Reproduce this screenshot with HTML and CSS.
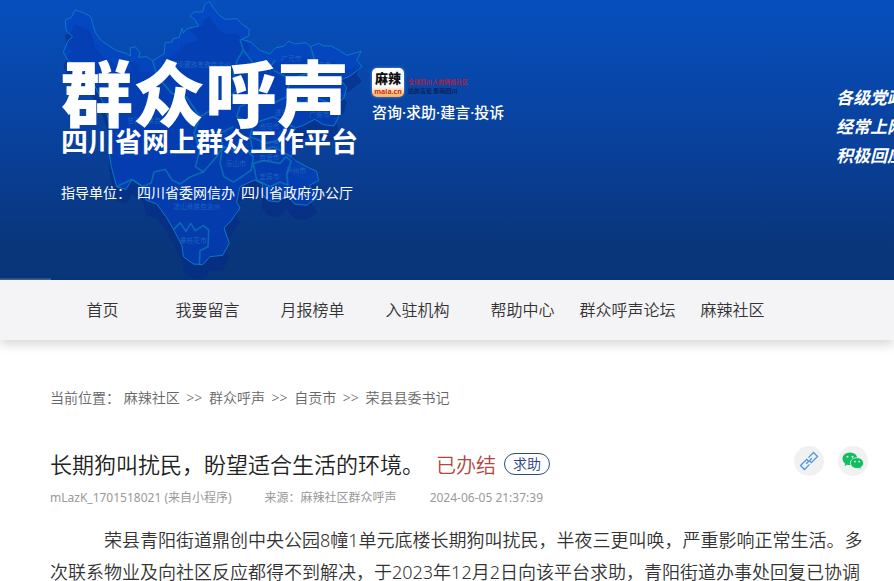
FILE: index.html
```html
<!DOCTYPE html>
<html lang="zh-CN">
  <head>
    <meta charset="UTF-8" />
    <meta name="viewport" content="width=device-width, initial-scale=1" />
    <title>群众呼声</title>
    <link rel="stylesheet" href="styles.css">
  </head>
  <body>
    <header class="banner">
      <svg class="map" viewBox="0 0 1020 840" aria-hidden="true">
        <defs>
          <path id="province" d="M105 30L130 38 152 50 158 70 166 98 184 122 208 138 230 152 258 160 272 168 270 144 286 140 300 158 296 172 320 170 338 182 372 162 376 128 396 126 400 116 418 112 426 84 430 100 440 86 476 78 464 58 450 48 462 36 488 36 494 14 508 4 522 26 536 44 556 58 590 56 606 72 628 88 626 108 604 118 632 126 658 150 690 162 706 144 732 138 746 124 766 132 796 128 812 140 836 130 852 138 874 138 896 150 920 166 964 154 950 180 966 200 930 228 902 240 920 262 912 294 886 316 896 350 882 378 850 374 824 358 790 376 766 384 754 410 766 436 754 470 766 482 800 500 830 514 836 542 808 556 832 592 800 616 764 612 740 586 714 606 684 602 664 578 668 552 644 540 600 560 590 606 600 624 572 664 552 684 568 730 548 766 510 770 488 794 460 792 430 770 426 738 402 690 378 650 350 612 318 600 308 560 276 538 258 568 230 560 214 500 206 450 216 400 200 340 186 300 160 250 124 206 84 182 70 156 84 122 98 110 78 92 76 60 94 52Z"/>
        </defs>
        <use href="#province" class="map-shadow" y="44"/>
        <use href="#province" class="map-land"/>
        <g class="map-borders">
          <path d="M338 182L352 230 396 280 440 292 480 350 520 326 560 300 600 260 580 220 592 180 610 150 600 118"/>
          <path d="M480 350L462 400 480 450 466 500 490 516 530 470 548 440 540 400 580 380"/>
          <path d="M230 560L276 538 308 560 334 548 342 516 376 508 396 540 420 552 452 530 490 516"/>
          <path d="M548 440L540 490 552 530 580 546 606 530 634 510 640 470 610 440 580 450Z"/>
          <path d="M640 490L672 482 720 490 738 470 754 484 740 520 744 556 720 546 690 560 650 540Z"/>
          <path d="M610 150L640 190 690 200 706 180M812 140L824 180 806 220 750 236 700 210M806 220L850 250 902 240M750 236L740 290 790 310 820 290 886 316"/>
          <path d="M740 290L700 310 640 300 600 320 590 350 640 370 700 350 740 370 766 384M640 370L630 410 680 430 754 410M630 410L640 460 700 440 754 470"/>
          <path d="M400 690L420 668 438 694 452 670 466 692 490 676 506 690 504 740 480 752 478 794"/>
        </g>
        <g class="map-names">
          <text x="392" y="200">阿坝藏族羌族自治州</text>
          <text x="262" y="370">甘孜藏族自治州</text>
          <text x="724" y="184">广元市</text>
          <text x="814" y="202">巴中市</text>
          <text x="808" y="352">广安市</text>
          <text x="704" y="346">遂宁市</text>
          <text x="658" y="388">资阳市</text>
          <text x="658" y="442">内江市</text>
          <text x="658" y="480">自贡市</text>
          <text x="558" y="498">乐山市</text>
          <text x="658" y="536">宜宾市</text>
          <text x="738" y="518">泸州市</text>
          <text x="400" y="628">凉山彝族自治州</text>
          <text x="420" y="728">攀枝花市</text>
        </g>
      </svg>

      <div class="brand">
        <h1 class="brand-name">群众呼声</h1>
        <p class="brand-sub">四川省网上群众工作平台</p>
        <p class="brand-units"><span>指导单位：</span><span>四川省委网信办</span><span>四川省政府办公厅</span></p>
      </div>

      <div class="partner">
        <div class="partner-row">
          <div class="mala"><b>麻辣</b><small>mala.cn</small></div>
          <div class="partner-text">
            <span class="partner-red">全球四川人的网络社区</span>
            <span class="partner-dark">达的言论 影响四川</span>
          </div>
        </div>
        <p class="slogan">咨询·求助·建言·投诉</p>
      </div>

      <div class="motto">
        <p>各级党政</p>
        <p>经常上网</p>
        <p>积极回应</p>
      </div>
    </header>

    <nav class="nav">
      <a href="#">首页</a>
      <a href="#">我要留言</a>
      <a href="#">月报榜单</a>
      <a href="#">入驻机构</a>
      <a href="#">帮助中心</a>
      <a href="#">群众呼声论坛</a>
      <a href="#">麻辣社区</a>
    </nav>

    <main class="content">
      <div class="crumbs">
        当前位置：
        <a href="#">麻辣社区</a> <span>&gt;&gt;</span>
        <a href="#">群众呼声</a> <span>&gt;&gt;</span>
        <a href="#">自贡市</a> <span>&gt;&gt;</span>
        <a href="#">荣县县委书记</a>
      </div>

      <div class="title-row">
        <h2 class="title">长期狗叫扰民，盼望适合生活的环境。</h2>
        <span class="status">已办结</span>
        <span class="tag">求助</span>
        <div class="share">
          <button type="button" aria-label="复制链接">
            <svg width="20" height="20" viewBox="0 0 20 20" fill="none" stroke="#4a97e0" stroke-width="1.3">
              <g transform="rotate(-45 10 10)">
                <path d="M8 12.800H.8V7.200h8.700v2.300M12 7.200h7.200v5.600h-8.700v-2.300"/>
                <path d="M6 10h8"/>
              </g>
            </svg>
          </button>
          <button type="button" aria-label="分享到微信">
            <svg width="22" height="18" viewBox="0 0 22 18">
              <path fill="#0fbf5f" d="M8 .5C3.800.5.5 3.300.5 6.800c0 2 1.100 3.700 2.800 4.900l-.7 2.300 2.600-1.300c.9.2 1.800.4 2.900.4C12.200 13 15.500 10.200 15.500 6.800S12.200.5 8 .5z"/>
              <path fill="#0fbf5f" stroke="#f1f1f1" stroke-width=".8" d="M15 5.700c-3.700 0-6.600 2.400-6.600 5.400s2.900 5.400 6.600 5.400c.8 0 1.600-.1 2.300-.3l2.200 1.200-.6-2c1.600-1 2.600-2.500 2.600-4.300 0-3-2.900-5.400-6.500-5.400z"/>
              <g fill="#f1f1f1">
                <circle cx="5.500" cy="4.800" r="1"/>
                <circle cx="10.500" cy="4.800" r="1"/>
                <circle cx="13" cy="9.600" r=".9"/>
                <circle cx="17.200" cy="9.600" r=".9"/>
              </g>
            </svg>
          </button>
        </div>
      </div>

      <div class="meta">
        <span>mLazK_1701518021 (来自小程序)</span>
        <span>来源：麻辣社区群众呼声</span>
        <span>2024-06-05 21:37:39</span>
      </div>

      <p class="text">荣县青阳街道鼎创中央公园8幢1单元底楼长期狗叫扰民，半夜三更叫唤，严重影响正常生活。多次联系物业及向社区反应都得不到解决，于2023年12月2日向该平台求助，青阳街道办事处回复已协调</p>
    </main>
  </body>
</html>
```

FILE: styles.css
```css
* {
  box-sizing: border-box;
}
body {
  margin: 0;
  font-family: "Noto Sans", "Noto Sans CJK SC", sans-serif;
  font-weight: 350;
  color: #333;
  background-color: #fff;
}
h1,
h2,
p {
  margin: 0;
}
a {
  color: inherit;
  text-decoration: none;
}

/* banner */
.banner {
  position: relative;
  display: flex;
  height: 280px;
  padding-left: 61px;
  overflow: hidden;
  color: #fff;
  white-space: nowrap;
  background: linear-gradient(#064fbd, #09419c 50%, #09357a 90%, #09357a);
}
.map {
  position: absolute;
  left: 40px;
  top: 0;
  width: 340px;
  height: 280px;
}
.map-shadow {
  fill: #062b86;
  opacity: 0.6;
}
.map-land {
  fill: #0445c8;
  fill-opacity: 0.6;
  stroke: #0d78c4;
  stroke-width: 3;
}
.map-borders {
  fill: none;
  stroke: #0b7cb8;
  stroke-width: 5;
  stroke-linejoin: round;
  opacity: 0.7;
}
.map-names {
  fill: #2a78c8;
  font-size: 20px;
  opacity: 0.7;
}
.brand {
  position: relative;
  flex: none;
  width: 311px;
  padding-top: 58px;
}
.brand-name {
  font-size: 72px;
  line-height: 70px;
  font-weight: 900;
}
.brand-sub {
  font-size: 27px;
  line-height: 28px;
  font-weight: 700;
}
.brand-units {
  display: flex;
  gap: 6px;
  margin-top: 27px;
  font-size: 14px;
  line-height: 20px;
  font-weight: 400;
}
.partner {
  position: relative;
  flex: none;
  width: 464px;
  padding-top: 68px;
}
.partner-row {
  display: flex;
  align-items: center;
  gap: 4px;
}
.mala {
  display: flex;
  flex-direction: column;
  align-items: center;
  width: 32px;
  height: 29px;
  border-radius: 5px;
  background: linear-gradient(#fff 62%, #f9b04a);
  box-shadow: 0 0 3px rgba(255, 255, 255, 0.4);
}
.mala b {
  font-size: 13px;
  line-height: 20px;
  font-weight: 900;
  color: #111;
}
.mala small {
  font-size: 7px;
  line-height: 7px;
  font-weight: 700;
  color: #d8261c;
}
.partner-text {
  display: flex;
  flex-direction: column;
  padding-top: 8px;
  font-size: 6px;
  line-height: 9px;
  font-weight: 700;
}
.partner-red {
  color: #a52346;
}
.partner-dark {
  color: #0a1f55;
}
.slogan {
  margin-top: 5px;
  font-size: 15px;
  line-height: 20px;
  font-weight: 500;
}
.motto {
  flex: none;
  padding-top: 83px;
  font-size: 17px;
  line-height: 29px;
  font-weight: 700;
  font-style: italic;
}

/* nav */
.nav {
  position: relative;
  display: flex;
  height: 60px;
  padding-left: 50px;
  background-color: #f4f4f6;
  box-shadow: 0 5px 10px rgba(0, 0, 0, 0.15);
}
.nav::before {
  content: "";
  position: absolute;
  left: 0;
  top: -2px;
  width: 51px;
  height: 2px;
  background: linear-gradient(#21427d, #55688f);
}
.nav a {
  width: 105px;
  font-size: 16px;
  line-height: 60px;
  text-align: center;
  white-space: nowrap;
}

/* article */
.content {
  padding: 48px 26px 0 50px;
}
.crumbs {
  font-size: 14px;
  line-height: 20px;
  color: #666;
}
.crumbs span {
  margin: 0 3px;
}
.title-row {
  display: flex;
  align-items: center;
  margin-top: 38px;
  height: 36px;
}
.title {
  font-size: 22px;
  line-height: 36px;
  font-weight: 350;
  color: #222;
}
.status {
  margin-left: 12px;
  font-size: 20px;
  color: #b5443f;
}
.tag {
  margin-left: 8px;
  padding: 0 8px;
  border: 1px solid #2b4a86;
  border-radius: 11px;
  font-size: 14px;
  line-height: 20px;
  color: #1f3f7d;
}
.share {
  display: flex;
  gap: 14px;
  margin-left: auto;
  padding-bottom: 6px;
}
.share button {
  display: flex;
  align-items: center;
  justify-content: center;
  width: 30px;
  height: 30px;
  padding: 0;
  border: none;
  border-radius: 50%;
  background-color: #f1f1f1;
  cursor: pointer;
}
.meta {
  display: flex;
  gap: 33px;
  margin-top: 6px;
  font-size: 12px;
  line-height: 20px;
  font-weight: 400;
  color: #999;
}
.text {
  margin-top: 16px;
  font-size: 18px;
  line-height: 32px;
  text-indent: 3em;
}
```
